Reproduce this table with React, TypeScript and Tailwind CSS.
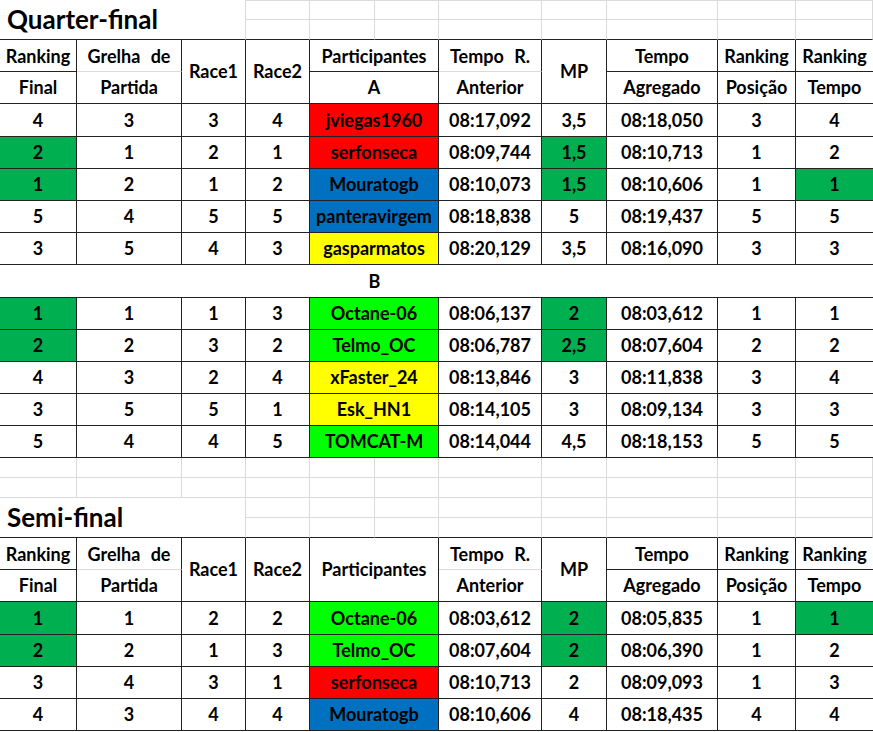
import React from "react";

const COLS =
  "grid grid-cols-[77px_105px_64px_64px_65px_64px_103px_65px_111px_78px_77px]";

type Row = {
  rank: string;
  rankG?: boolean;
  grid: string;
  r1: string;
  r2: string;
  name: string;
  color: string;
  tr: string;
  mp: string;
  mpG?: boolean;
  agg: string;
  rp: string;
  rt: string;
  rtG?: boolean;
};

const RED = "bg-[#ff0000]";
const BLUE = "bg-[#0070c0]";
const YEL = "bg-[#ffff00]";
const LIME = "bg-[#00ff00]";
const GREEN = "bg-[#00b050]";

const quarterA: Row[] = [
  { rank: "4", grid: "3", r1: "3", r2: "4", name: "jviegas1960", color: RED, tr: "08:17,092", mp: "3,5", agg: "08:18,050", rp: "3", rt: "4" },
  { rank: "2", rankG: true, grid: "1", r1: "2", r2: "1", name: "serfonseca", color: RED, tr: "08:09,744", mp: "1,5", mpG: true, agg: "08:10,713", rp: "1", rt: "2" },
  { rank: "1", rankG: true, grid: "2", r1: "1", r2: "2", name: "Mouratogb", color: BLUE, tr: "08:10,073", mp: "1,5", mpG: true, agg: "08:10,606", rp: "1", rt: "1", rtG: true },
  { rank: "5", grid: "4", r1: "5", r2: "5", name: "panteravirgem", color: BLUE, tr: "08:18,838", mp: "5", agg: "08:19,437", rp: "5", rt: "5" },
  { rank: "3", grid: "5", r1: "4", r2: "3", name: "gasparmatos", color: YEL, tr: "08:20,129", mp: "3,5", agg: "08:16,090", rp: "3", rt: "3" },
];

const quarterB: Row[] = [
  { rank: "1", rankG: true, grid: "1", r1: "1", r2: "3", name: "Octane-06", color: LIME, tr: "08:06,137", mp: "2", mpG: true, agg: "08:03,612", rp: "1", rt: "1" },
  { rank: "2", rankG: true, grid: "2", r1: "3", r2: "2", name: "Telmo_OC", color: LIME, tr: "08:06,787", mp: "2,5", mpG: true, agg: "08:07,604", rp: "2", rt: "2" },
  { rank: "4", grid: "3", r1: "2", r2: "4", name: "xFaster_24", color: YEL, tr: "08:13,846", mp: "3", agg: "08:11,838", rp: "3", rt: "4" },
  { rank: "3", grid: "5", r1: "5", r2: "1", name: "Esk_HN1", color: YEL, tr: "08:14,105", mp: "3", agg: "08:09,134", rp: "3", rt: "3" },
  { rank: "5", grid: "4", r1: "4", r2: "5", name: "TOMCAT-M", color: LIME, tr: "08:14,044", mp: "4,5", agg: "08:18,153", rp: "5", rt: "5" },
];

const semi: Row[] = [
  { rank: "1", rankG: true, grid: "1", r1: "2", r2: "2", name: "Octane-06", color: LIME, tr: "08:03,612", mp: "2", mpG: true, agg: "08:05,835", rp: "1", rt: "1", rtG: true },
  { rank: "2", rankG: true, grid: "2", r1: "1", r2: "3", name: "Telmo_OC", color: LIME, tr: "08:07,604", mp: "2", mpG: true, agg: "08:06,390", rp: "1", rt: "2" },
  { rank: "3", grid: "4", r1: "3", r2: "1", name: "serfonseca", color: RED, tr: "08:10,713", mp: "2", agg: "08:09,093", rp: "1", rt: "3" },
  { rank: "4", grid: "3", r1: "4", r2: "4", name: "Mouratogb", color: BLUE, tr: "08:10,606", mp: "4", agg: "08:18,435", rp: "4", rt: "4" },
];

const cellBase =
  "flex items-center justify-center whitespace-nowrap overflow-hidden border-b border-[#222]";

function Cell({
  children,
  className = "",
  last = false,
}: {
  children?: React.ReactNode;
  className?: string;
  last?: boolean;
}) {
  return (
    <div className={`${cellBase} ${last ? "" : "border-r"} ${className}`}>
      {children}
    </div>
  );
}

function DataRow({ row, tall }: { row: Row; tall?: boolean }) {
  return (
    <div className={`${COLS} ${tall ? "h-[33px]" : "h-[32px]"} text-[18px] font-bold`}>
      <Cell className={row.rankG ? GREEN : ""}>{row.rank}</Cell>
      <Cell>{row.grid}</Cell>
      <Cell>{row.r1}</Cell>
      <Cell>{row.r2}</Cell>
      <Cell className={`col-span-2 ${row.color}`}>{row.name}</Cell>
      <Cell>{row.tr}</Cell>
      <Cell className={row.mpG ? GREEN : ""}>{row.mp}</Cell>
      <Cell>{row.agg}</Cell>
      <Cell>{row.rp}</Cell>
      <Cell last className={row.rtG ? GREEN : ""}>{row.rt}</Cell>
    </div>
  );
}

function LightRow({ top = false }: { top?: boolean }) {
  const cells = Array.from({ length: 11 });
  return (
    <div className={`${COLS} h-[20px]`}>
      {cells.map((_, i) => (
        <div
          key={i}
          className={`border-r border-b border-[#dadada] ${top ? "border-t" : ""}`}
        />
      ))}
    </div>
  );
}

function TitleBlock({ title, top = false }: { title: string; top?: boolean }) {
  const rest = Array.from({ length: 8 });
  return (
    <div className={`${COLS} grid-rows-[20px_20px] h-[40px]`}>
      <div className="col-span-3 row-span-2 flex items-center pl-[7px] text-[26px] font-bold border-r border-[#dadada] border-b-[1px] border-b-[#222]">
        {title}
      </div>
      {rest.map((_, i) => (
        <div
          key={"a" + i}
          className={`border-r border-b border-[#dadada] ${top ? "border-t" : ""}`}
        />
      ))}
      {rest.map((_, i) => (
        <div key={"b" + i} className="border-r border-[#dadada] border-b border-b-[#222]" />
      ))}
    </div>
  );
}

function Header({ split }: { split: boolean }) {
  const base = "flex items-center justify-center whitespace-nowrap border-r border-[#222]";
  const endCell = "flex items-center justify-center whitespace-nowrap border-b border-[#222]";
  return (
    <div className={`${COLS} grid-rows-[32px_32px] h-[64px] text-[18px] font-bold`}>
      <div className={`${base} border-b pt-[2px]`}>Ranking</div>
      <div className={`${base} border-b border-b-[#dadada] [word-spacing:6px] pt-[2px]`}>Grelha de</div>
      <div className={`${base} border-b row-span-2`}>Race1</div>
      <div className={`${base} border-b row-span-2`}>Race2</div>
      {split ? (
        <div className={`${base} border-b col-span-2 pt-[2px]`}>Participantes</div>
      ) : (
        <div className={`${base} border-b col-span-2 row-span-2`}>Participantes</div>
      )}
      <div className={`${base} border-b border-b-[#dadada] [word-spacing:6px] pt-[2px]`}>Tempo R.</div>
      <div className={`${base} border-b row-span-2`}>MP</div>
      <div className={`${base} border-b pt-[2px]`}>Tempo</div>
      <div className={`${base} border-b pt-[2px]`}>Ranking</div>
      <div className={`${endCell} pt-[2px]`}>Ranking</div>
      <div className={`${base} border-b`}>Final</div>
      <div className={`${base} border-b`}>Partida</div>
      {split && <div className={`${base} border-b col-span-2`}>A</div>}
      <div className={`${base} border-b`}>Anterior</div>
      <div className={`${base} border-b`}>Agregado</div>
      <div className={`${base} border-b`}>Posição</div>
      <div className={endCell}>Tempo</div>
    </div>
  );
}

function GroupRow({ label }: { label: string }) {
  return (
    <div className={`${COLS} h-[33px] border-b border-[#222] text-[18px] font-bold`}>
      <div className="col-span-4" />
      <div className="col-span-2 flex items-center justify-center">{label}</div>
      <div className="col-span-5" />
    </div>
  );
}

export default function App() {
  return (
    <div className="w-[873px] h-[732px] overflow-hidden bg-white text-black font-[Lato,'Open_Sans',sans-serif]">
      <TitleBlock title="Quarter-final" top />
      <Header split />
      {quarterA.map((r, i) => (
        <DataRow key={"a" + i} row={r} tall={i === 0} />
      ))}
      <GroupRow label="B" />
      {quarterB.map((r, i) => (
        <DataRow key={"b" + i} row={r} />
      ))}
      <LightRow />
      <LightRow />
      <TitleBlock title="Semi-final" />
      <Header split={false} />
      {semi.map((r, i) => (
        <DataRow key={"s" + i} row={r} tall={i === 0} />
      ))}
    </div>
  );
}
